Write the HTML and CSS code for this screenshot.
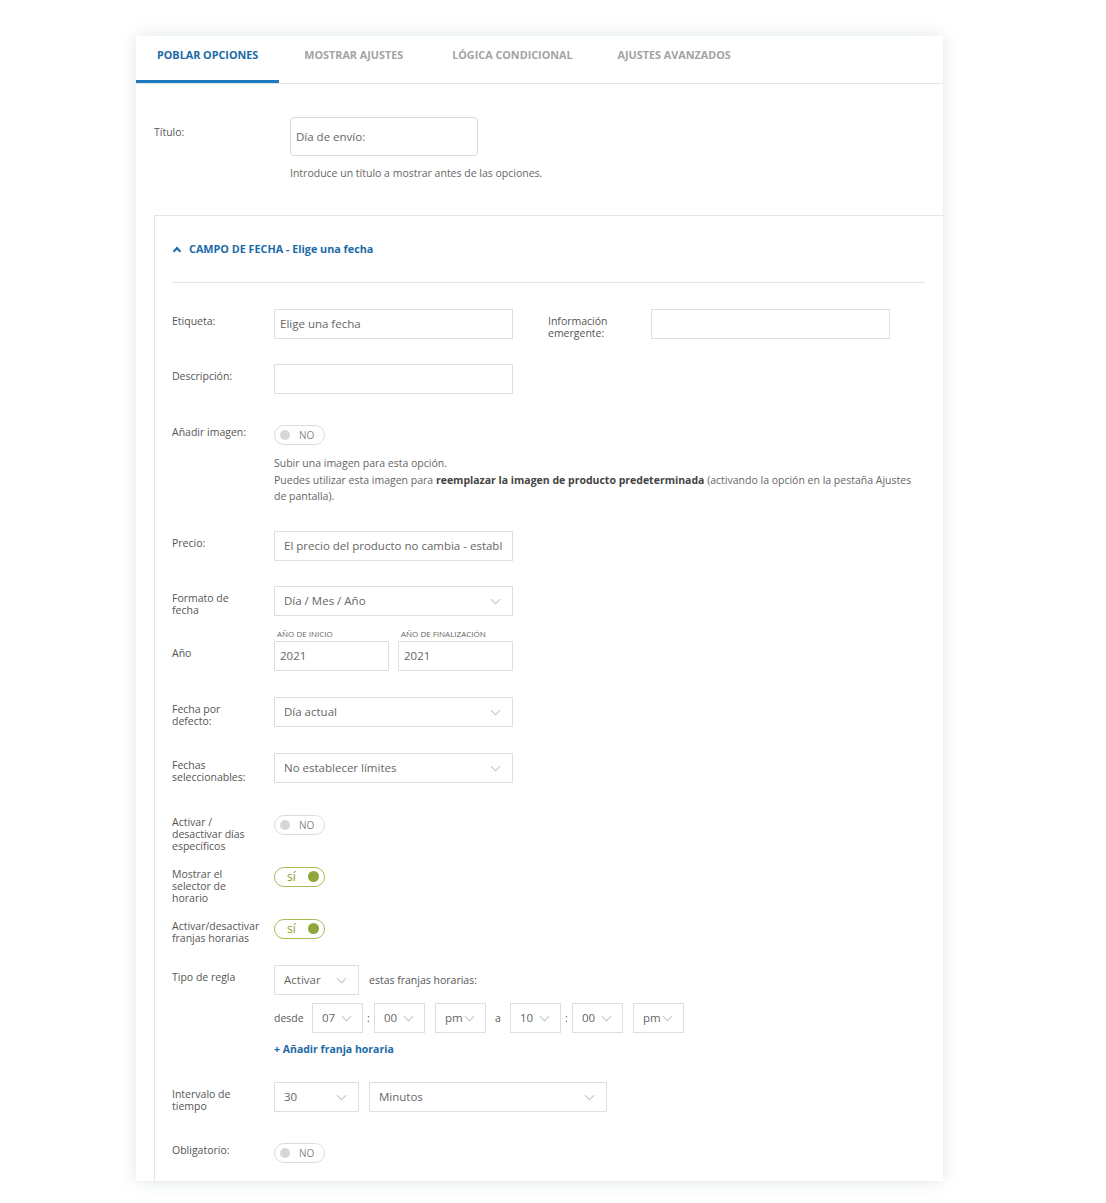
FILE: index.html
```html
<!DOCTYPE html>
<html lang="es">
<head>
    <meta charset="UTF-8">
    <meta name="viewport" content="width=device-width, initial-scale=1.0">
    <title>Campo de fecha</title>
    <link rel="stylesheet" href="styles.css">
</head>
<body>
    <div class="card">
        <div class="tabs">
            <div class="tab active">POBLAR OPCIONES</div>
            <div class="tab">MOSTRAR AJUSTES</div>
            <div class="tab">LÓGICA CONDICIONAL</div>
            <div class="tab">AJUSTES AVANZADOS</div>
        </div>

        <div class="card-body">
            <div class="title-row">
                <div class="title-label">Título:</div>
                <div>
                    <div class="title-input">Día de envío:</div>
                    <p class="help">Introduce un título a mostrar antes de las opciones.</p>
                </div>
            </div>

            <div class="section">
                <div class="section-head">
                    <span class="caret-up"></span>
                    CAMPO DE FECHA - Elige una fecha
                </div>

                <div class="section-body">
                    <div class="row">
                        <div class="lbl">Etiqueta:</div>
                        <div class="input">Elige una fecha</div>
                        <div class="lbl lbl-side">Información emergente:</div>
                        <div class="input"></div>
                    </div>

                    <div class="row gap-25">
                        <div class="lbl">Descripción:</div>
                        <div class="input"></div>
                    </div>

                    <div class="row gap-26">
                        <div class="lbl">Añadir imagen:</div>
                        <div class="field-col">
                            <div class="toggle-wrap">
                                <div class="toggle"><span class="knob"></span><span class="toggle-text">NO</span></div>
                            </div>
                            <p class="help help-img">Subir una imagen para esta opción.<br>Puedes utilizar esta imagen para <strong>reemplazar la imagen de producto predeterminada</strong> (activando la opción en la pestaña Ajustes de pantalla).</p>
                        </div>
                    </div>

                    <div class="row gap-26">
                        <div class="lbl">Precio:</div>
                        <div class="input select-pad">El precio del producto no cambia - establ</div>
                    </div>

                    <div class="row gap-25">
                        <div class="lbl">Formato de fecha</div>
                        <div class="input select">Día / Mes / Año</div>
                    </div>

                    <div class="row gap-12">
                        <div class="lbl lbl-year">Año</div>
                        <div class="year-box">
                            <div class="sublbl">Año de inicio</div>
                            <div class="input year">2021</div>
                        </div>
                        <div class="year-box">
                            <div class="sublbl">Año de finalización</div>
                            <div class="input year">2021</div>
                        </div>
                    </div>

                    <div class="row gap-26">
                        <div class="lbl">Fecha por defecto:</div>
                        <div class="input select">Día actual</div>
                    </div>

                    <div class="row gap-26">
                        <div class="lbl">Fechas seleccionables:</div>
                        <div class="input select">No establecer límites</div>
                    </div>

                    <div class="row gap-27">
                        <div class="lbl">Activar / desactivar días específicos</div>
                        <div class="toggle-wrap">
                            <div class="toggle"><span class="knob"></span><span class="toggle-text">NO</span></div>
                        </div>
                    </div>

                    <div class="row gap-10">
                        <div class="lbl">Mostrar el selector de horario</div>
                        <div class="toggle-wrap">
                            <div class="toggle on"><span class="toggle-text">sí</span><span class="knob"></span></div>
                        </div>
                    </div>

                    <div class="row gap-10">
                        <div class="lbl">Activar/desactivar franjas horarias</div>
                        <div class="toggle-wrap">
                            <div class="toggle on"><span class="toggle-text">sí</span><span class="knob"></span></div>
                        </div>
                    </div>

                    <div class="row gap-21">
                        <div class="lbl">Tipo de regla</div>
                        <div class="field-col">
                            <div class="inline">
                                <div class="input select small">Activar</div>
                                <span class="inline-text">estas franjas horarias:</span>
                            </div>
                            <div class="inline time-row">
                                <span class="desde">desde</span>
                                <div class="input select time">07</div>
                                <span class="colon">:</span>
                                <div class="input select time">00</div>
                                <div class="input select time ampm">pm</div>
                                <span class="to">a</span>
                                <div class="input select time">10</div>
                                <span class="colon">:</span>
                                <div class="input select time">00</div>
                                <div class="input select time ampm">pm</div>
                            </div>
                            <a class="add-link">+ Añadir franja horaria</a>
                        </div>
                    </div>

                    <div class="row gap-26">
                        <div class="lbl">Intervalo de tiempo</div>
                        <div class="inline">
                            <div class="input select small">30</div>
                            <div class="input select unit">Minutos</div>
                        </div>
                    </div>

                    <div class="row gap-26">
                        <div class="lbl">Obligatorio:</div>
                        <div class="toggle-wrap">
                            <div class="toggle"><span class="knob"></span><span class="toggle-text">NO</span></div>
                        </div>
                    </div>
                </div>
            </div>
        </div>
    </div>
</body>
</html>
```

FILE: styles.css
```css
body {
    margin: 0;
    font-family: 'Open Sans', 'Noto Sans', sans-serif;
    background: #fff;
    color: #5a5a5a;
}

.card {
    margin: 36px 0 24px 136px;
    width: 807px;
    background: #fff;
    box-shadow: 0 0 16px rgba(150, 175, 190, 0.32);
}

/* tabs */
.tabs {
    display: flex;
    border-bottom: 1px solid #e3e3e3;
}

.tab {
    box-sizing: border-box;
    height: 47px;
    padding: 12px 22px 0 21px;
    line-height: 14px;
    font-size: 10.8px;
    font-weight: bold;
    color: #a3a3a3;
    border-bottom: 3px solid transparent;
}

.tab.active {
    padding-right: 21px;
    color: #1b6aa8;
    border-bottom-color: #1e79bd;
}

.tab:nth-child(2) {
    padding-left: 25px;
}

.tab:nth-child(3) {
    padding-left: 27px;
}

.tab:nth-child(4) {
    padding-left: 23px;
}

.card-body {
    padding: 33px 0 0 18px;
}

.title-row {
    display: flex;
}

.title-label {
    width: 136px;
    padding-top: 8px;
    line-height: 14px;
    font-size: 10.5px;
}

.title-input {
    box-sizing: border-box;
    width: 188px;
    height: 39px;
    border: 1px solid #dadada;
    border-radius: 4px;
    padding: 0 5px;
    line-height: 37px;
    font-size: 11.5px;
    color: #666;
}

.help {
    margin: 9px 0 0;
    line-height: 16px;
    font-size: 10.5px;
    color: #666;
}

.help strong {
    color: #444;
}

/* date field section */
.section {
    margin-top: 34px;
    border: 1px solid #e5e5e5;
    border-bottom: none;
    border-right: none;
    padding: 0 18px 13px 17px;
}

.section-head {
    display: flex;
    align-items: center;
    padding: 26px 0 26px;
    line-height: 14px;
    font-size: 10.8px;
    font-weight: bold;
    color: #1b6aa8;
    border-bottom: 1px solid #e3e3e3;
}

.caret-up {
    width: 4px;
    height: 4px;
    border-left: 2px solid #1b6aa8;
    border-top: 2px solid #1b6aa8;
    transform: rotate(45deg);
    margin: 3px 9px 0 2px;
}

.section-body {
    padding-top: 26px;
}

.row {
    display: flex;
    align-items: flex-start;
}

.gap-10 { margin-top: 10px; }
.gap-12 { margin-top: 12px; }
.gap-21 { margin-top: 21px; }
.gap-25 { margin-top: 25px; }
.gap-26 { margin-top: 26px; }
.gap-27 { margin-top: 27px; }

.lbl {
    flex-shrink: 0;
    width: 84px;
    margin-right: 18px;
    padding-top: 6px;
    line-height: 12px;
    font-size: 10.5px;
    color: #555;
}

.lbl-side {
    margin-left: 35px;
    width: 85px;
}

.lbl-year {
    padding-top: 19px;
}

.input {
    position: relative;
    flex-shrink: 0;
    box-sizing: border-box;
    width: 239px;
    height: 30px;
    border: 1px solid #dedede;
    padding: 0 5px;
    line-height: 28px;
    font-size: 11.5px;
    color: #666;
    white-space: nowrap;
    overflow: hidden;
}

.select-pad,
.select {
    padding: 0 9px;
}

.select::after {
    content: '';
    position: absolute;
    right: 13px;
    top: 9px;
    width: 6px;
    height: 6px;
    border-right: 1px solid #c4c4c4;
    border-bottom: 1px solid #c4c4c4;
    transform: rotate(45deg);
}

.year-box {
    margin-right: 9px;
}

.sublbl {
    line-height: 12px;
    margin: 0 0 1px 3px;
    font-size: 8px;
    text-transform: uppercase;
    color: #666;
}

.input.year {
    width: 115px;
}

.field-col {
    display: flex;
    flex-direction: column;
}

.toggle-wrap {
    height: 30px;
    padding-top: 5px;
    box-sizing: border-box;
}

.toggle {
    box-sizing: border-box;
    display: flex;
    align-items: center;
    width: 51px;
    height: 20px;
    border: 1px solid #dcdcdc;
    border-radius: 10px;
    padding: 0 5px;
}

.knob {
    width: 10px;
    height: 10px;
    border-radius: 50%;
    background: #d6d6d6;
}

.toggle-text {
    margin-left: 9px;
    font-size: 10px;
    color: #888;
}

.toggle.on {
    border-color: #a8bc52;
    justify-content: space-between;
    padding: 0 5px 0 12px;
}

.toggle.on .toggle-text {
    margin-left: 0;
    font-size: 12px;
    color: #86a023;
}

.toggle.on .knob {
    width: 11px;
    height: 11px;
    background: #8ea63a;
}

.help-img {
    margin-top: 5px;
    line-height: 16.5px;
    width: 640px;
}

/* time slots */
.inline {
    display: flex;
    align-items: center;
}

.input.small {
    width: 85px;
}

.inline-text {
    margin-left: 10px;
    font-size: 10.5px;
    color: #555;
}

.time-row {
    margin-top: 8px;
}

.desde {
    width: 38px;
    font-size: 10.5px;
}

.input.time {
    width: 51px;
}

.input.time::after {
    right: 12px;
}

.colon {
    width: 11px;
    text-align: center;
    font-size: 10.5px;
}

.input.ampm {
    margin-left: 10px;
}

.to {
    width: 24px;
    text-align: center;
    font-size: 10.5px;
}

.add-link {
    margin-top: 9px;
    line-height: 14px;
    font-size: 10.5px;
    font-weight: bold;
    color: #1b6aa8;
}

.input.unit {
    margin-left: 10px;
    width: 238px;
}
```
